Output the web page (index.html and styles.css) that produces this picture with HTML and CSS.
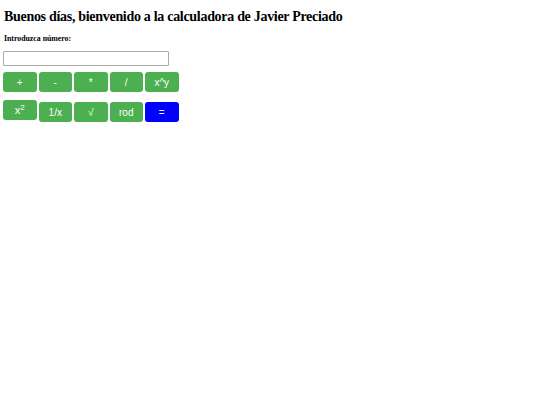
FILE: index.html
```html
<!DOCTYPE html>
<html lang="es">
<head>
<meta charset="utf-8">
<link rel="stylesheet" href="styles.css">
</head>
<body>
<h2 class="title">Buenos días, bienvenido a la calculadora de Javier Preciado</h2>
<h6 class="label">Introduzca número:</h6>
<input class="num" type="text">
<div class="row">
<button class="btn">+</button>
<button class="btn">-</button>
<button class="btn">*</button>
<button class="btn">/</button>
<button class="btn">x^y</button>
</div>
<div class="row row2">
<button class="btn sq">x<sup>2</sup></button>
<button class="btn">1/x</button>
<button class="btn">√</button>
<button class="btn">rod</button>
<button class="btn blue">=</button>
</div>
</body>
</html>
```
FILE: styles.css
```css
html, body { margin: 0; padding: 0; background: #fff; }
body { padding: 3px 3px; font-family: "Liberation Serif", serif; color: #000; }
.title { font-size: 14px; letter-spacing: -0.3px; font-weight: bold; margin: 6px 0 0 1px; line-height: 16px; }
.label { font-size: 7.8px; font-weight: bold; margin: 9px 0 0 1px; line-height: 10px; }
.num { display: block; width: 166px; height: 15px; box-sizing: border-box; margin: 7px 0 0 0; border: 1px solid #a9a9a9; border-radius: 1px; padding: 0; background: #fff; }
.row { display: flex; gap: 2px; margin-top: 6px; align-items: flex-start; }
.row2 { margin-top: 10px; }
.btn { width: 33.5px; height: 20px; box-sizing: border-box; background: #4caf50; color: #fff; border: none; border-radius: 3px; font-family: "Liberation Sans", sans-serif; font-size: 10px; padding: 0; }
.sq { margin-top: -2px; font-size: 11px; }
.blue { background: #0000ff; }
.btn sup { font-size: 8px; line-height: 1; vertical-align: 4px; }
```
